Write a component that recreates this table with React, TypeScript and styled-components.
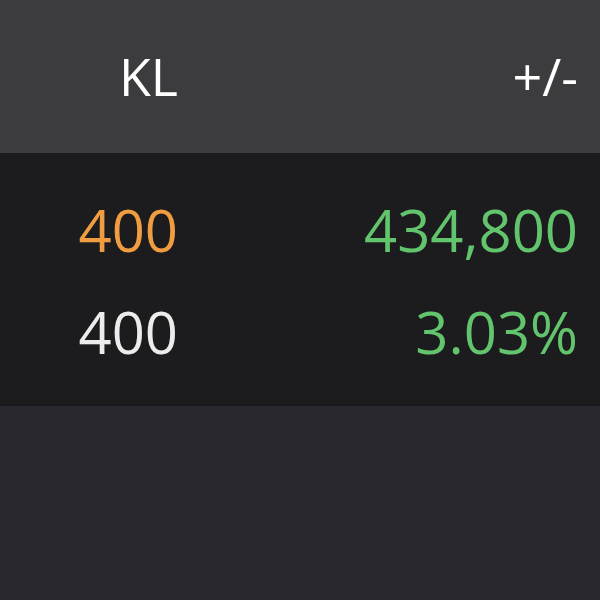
import React from 'react';
import styled, { createGlobalStyle } from 'styled-components';

const GlobalStyle = createGlobalStyle`
 html, body {
   margin: 0;
   padding: 0;
   background: #2a282f;
 }
 body {
   font-family: "Open Sans", "Noto Sans", sans-serif;
 }
`;

const Screen = styled.div`
 width: 600px;
 height: 600px;
 background: #2a282f;
 display: flex;
 flex-direction: column;
 overflow: hidden;
`;

const Header = styled.div`
 height: 153px;
 background: #3c3c3e;
 display: grid;
 grid-template-columns: 178px 1fr;
 align-items: center;
 padding-right: 22px;
 box-sizing: border-box;
 color: #ffffff;
 font-size: 52px;
 line-height: 1;
`;

const HeadCell = styled.div`
 text-align: right;
 padding-bottom: 2px;
`;

const Body = styled.div`
 background: #1c1c1e;
 padding: 26px 0 22px;
 border-bottom: 1px solid #1a181f;
`;

const Row = styled.div`
 height: 102px;
 display: grid;
 grid-template-columns: 178px 1fr;
 align-items: center;
 padding-right: 22px;
 box-sizing: border-box;
 font-size: 58px;
 line-height: 102px;
`;

const Cell = styled.div<{ $color: string }>`
 text-align: right;
 color: ${(p) => p.$color};
`;

const rows = [
 { kl: '400', klColor: '#ef9d40', change: '434,800' },
 { kl: '400', klColor: '#ececec', change: '3.03%' },
];

const App = () => {
 return (
   <Screen>
     <GlobalStyle />
     <Header>
       <HeadCell>KL</HeadCell>
       <HeadCell>+/-</HeadCell>
     </Header>
     <Body>
       {rows.map((r, i) => (
         <Row key={i}>
           <Cell $color={r.klColor}>{r.kl}</Cell>
           <Cell $color="#62c46c">{r.change}</Cell>
         </Row>
       ))}
     </Body>
   </Screen>
 );
};

export default App;
